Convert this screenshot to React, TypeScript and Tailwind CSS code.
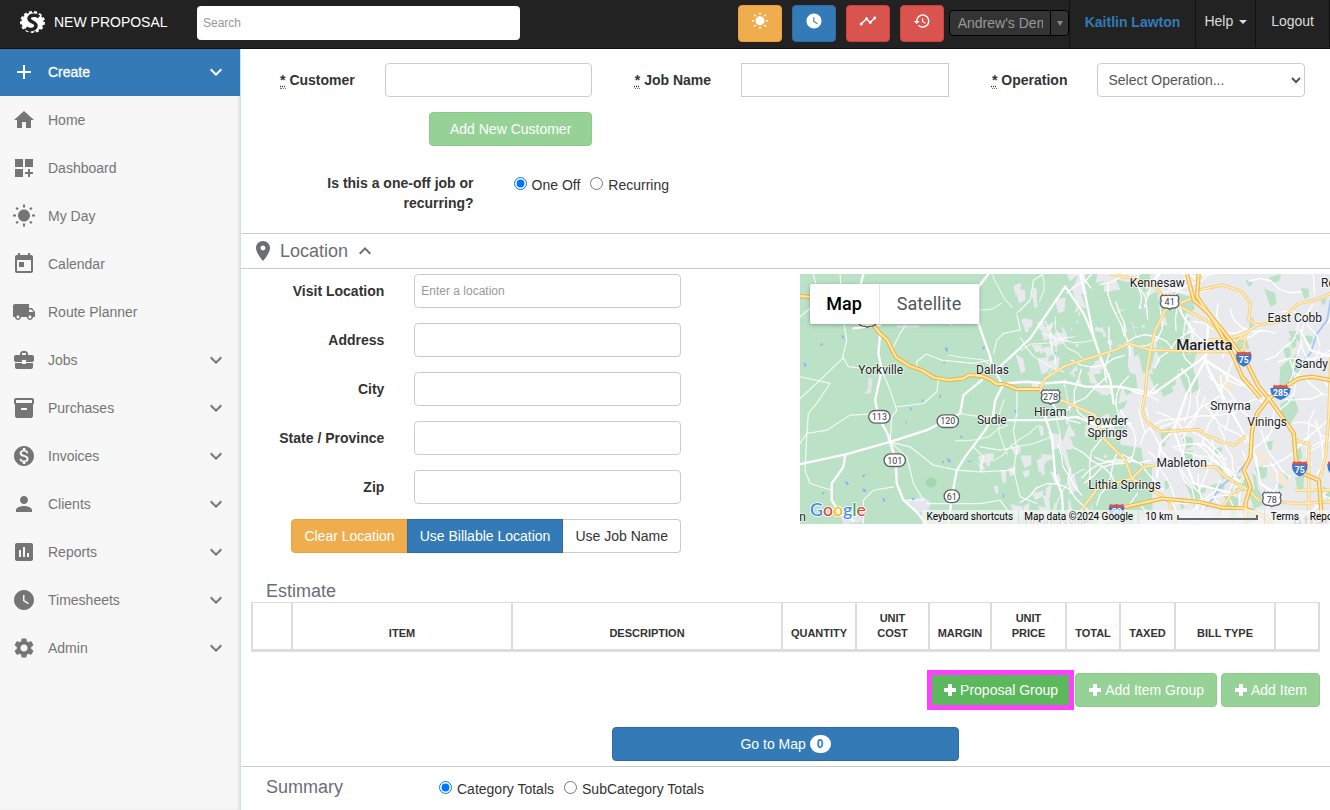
import type { ReactNode } from "react";
import type { IconType } from "react-icons";
import {
  MdAdd,
  MdAssessment,
  MdBusinessCenter,
  MdDashboardCustomize,
  MdExpandLess,
  MdExpandMore,
  MdHistory,
  MdHome,
  MdInventory2,
  MdLocalShipping,
  MdLocationOn,
  MdMonetizationOn,
  MdPerson,
  MdSettings,
  MdTimeline,
  MdToday,
  MdWatchLater,
  MdWbSunny,
} from "react-icons/md";

type NavItem = { label: string; icon: IconType; expandable?: boolean };

const navItems: NavItem[] = [
  { label: "Home", icon: MdHome },
  { label: "Dashboard", icon: MdDashboardCustomize },
  { label: "My Day", icon: MdWbSunny },
  { label: "Calendar", icon: MdToday },
  { label: "Route Planner", icon: MdLocalShipping },
  { label: "Jobs", icon: MdBusinessCenter, expandable: true },
  { label: "Purchases", icon: MdInventory2, expandable: true },
  { label: "Invoices", icon: MdMonetizationOn, expandable: true },
  { label: "Clients", icon: MdPerson, expandable: true },
  { label: "Reports", icon: MdAssessment, expandable: true },
  { label: "Timesheets", icon: MdWatchLater, expandable: true },
  { label: "Admin", icon: MdSettings, expandable: true },
];

const quickActions = [
  { label: "My day", icon: MdWbSunny, color: "border-[#eea236] bg-[#f0ad4e]" },
  { label: "Clock in", icon: MdWatchLater, color: "border-[#2e6da4] bg-[#337ab7]" },
  { label: "Activity", icon: MdTimeline, color: "border-[#d43f3a] bg-[#d9534f]" },
  { label: "History", icon: MdHistory, color: "border-[#d43f3a] bg-[#d9534f]" },
];

const locationFields = [
  { id: "visit-location", label: "Visit Location", placeholder: "Enter a location" },
  { id: "address", label: "Address" },
  { id: "city", label: "City" },
  { id: "state", label: "State / Province" },
  { id: "zip", label: "Zip" },
];

const columns = [
  { label: "", width: "w-[40px]" },
  { label: "Item", width: "w-[220px]" },
  { label: "Description", width: "" },
  { label: "Quantity", width: "w-[74px]" },
  { label: "Unit Cost", width: "w-[73px]" },
  { label: "Margin", width: "w-[62px]" },
  { label: "Unit Price", width: "w-[75px]" },
  { label: "Total", width: "w-[54px]" },
  { label: "Taxed", width: "w-[55px]" },
  { label: "Bill Type", width: "w-[100px]" },
  { label: "", width: "w-[44px]" },
];

const inputClass =
  "h-[34px] w-full border border-[#ccc] bg-white px-1.5 text-xs text-[#555] placeholder:text-[#999]";

function Logo() {
  return (
    <svg viewBox="0 0 50 44" className="h-[22px] w-[25px]" aria-hidden="true">
      <ellipse cx="25" cy="22" rx="22" ry="19" fill="#fff" />
      <ellipse cx="25" cy="22" rx="23" ry="20" fill="none" stroke="#fff" strokeWidth="4" strokeDasharray="6 4.400" />
      <path
        d="M38 12C32 6 19 8 18 15c0 7 14 7 14 14 0 8-12 11-20 5"
        fill="none"
        stroke="#222"
        strokeWidth="7"
      />
    </svg>
  );
}

function Header() {
  return (
    <header className="flex h-[49px] items-start border-b border-[#101010] bg-[#222] text-[#ddd]">
      <a href="#home" className="flex h-11 w-[197px] shrink-0 items-center gap-[9px] pl-5 text-white">
        <Logo />
        <span>NEW PROPOSAL</span>
      </a>
      <input
        type="search"
        aria-label="Search"
        placeholder="Search"
        className="mt-1.5 h-[34px] w-[323px] rounded bg-white px-1.5 text-xs text-[#555] placeholder:text-[#999]"
      />
      <div className="mt-[5px] ml-auto flex gap-2.5">
        {quickActions.map(({ label, icon: Icon, color }) => (
          <button
            key={label}
            aria-label={label}
            className={`flex h-[37px] w-11 items-center justify-center rounded border pb-1.5 text-white ${color}`}
          >
            <Icon size={18} />
          </button>
        ))}
      </div>
      <div className="relative mt-2.5 ml-[5px]">
        <select
          aria-label="Company"
          className="h-[26px] w-[120px] appearance-none rounded border border-black bg-[#333] pr-[25px] pl-2 text-[#999]"
        >
          <option>Andrew's Demo</option>
        </select>
        <span className="pointer-events-none absolute inset-y-0 right-0 flex w-[19px] items-center justify-center border-l border-black">
          <svg viewBox="0 0 6 5" className="h-[5px] w-1.5" aria-hidden="true">
            <path d="M0 0h6L3 5z" fill="#888" />
          </svg>
        </span>
      </div>
      <nav className="flex h-[47px] leading-5">
        <a href="#profile" className="border-l border-[#101010] px-[15px] pt-3 font-bold text-[#337ab7]">
          Kaitlin Lawton
        </a>
        <a href="#help" className="flex gap-1.5 border-l border-[#101010] px-2 pt-[11px]">
          Help
          <svg viewBox="0 0 8 4" className="mt-[9px] h-1 w-2" aria-hidden="true">
            <path d="M0 0h8L4 4z" fill="#ddd" />
          </svg>
        </a>
        <a href="#logout" className="border-x border-[#101010] px-[15px] pt-[11px]">
          Logout
        </a>
      </nav>
    </header>
  );
}

function Sidebar() {
  return (
    <aside className="w-[241px] shrink-0 border-r border-[#d5dfe8] bg-[#f7f7f7] text-[#757575] shadow-[inset_-2px_0_2px_rgba(0,0,0,0.08)]">
      <button className="flex h-[47px] w-full items-center gap-3 bg-[#337ab7] px-3 pb-px text-left text-white">
        <MdAdd size={24} />
        <span className="flex-1 [-webkit-text-stroke:0.3px]">Create</span>
        <MdExpandMore size={24} />
      </button>
      <nav>
        {navItems.map(({ label, icon: Icon, expandable }) => (
          <a key={label} href={`#${label}`} className="flex h-12 items-center gap-3 px-3">
            <Icon size={24} />
            <span className="flex-1">{label}</span>
            {expandable && <MdExpandMore size={24} />}
          </a>
        ))}
      </nav>
    </aside>
  );
}

function RequiredField({ id, label, children }: { id: string; label: string; children: ReactNode }) {
  return (
    <div className="flex items-center">
      <label htmlFor={id} className="w-1/3 px-[15px] text-right font-bold whitespace-nowrap">
        <abbr title="required" className="border-b border-dotted border-[#777]">*</abbr> {label}
      </label>
      <div className="w-2/3 px-[15px]">{children}</div>
    </div>
  );
}

function Radio({ name, label, checked }: { name: string; label: string; checked?: boolean }) {
  return (
    <label className="flex items-center gap-[5px] leading-5">
      <input type="radio" name={name} defaultChecked={checked} className="mb-[3px] h-[13px] w-[13px] accent-[#0075ff]" />
      {label}
    </label>
  );
}

function PlusIcon() {
  return (
    <svg viewBox="0 0 14 14" className="h-3.5 w-3.5" aria-hidden="true">
      <path d="M5.500 1h3q.5 0 .5.500V5h3.500q.5 0 .5.500v3q0 .5-.5.500H9v3.500q0 .5-.5.500h-3q-.5 0-.5-.5V9H1.500q-.5 0-.5-.5v-3q0-.5.500-.5H5V1.500q0-.5.500-.5z" fill="#fff" />
    </svg>
  );
}

/* ---- Map ---- */

const majorRoads = [
  "240,190 235,250 245,300 225,390 235,440 262,490 270,515 287,570 290,640 310,690 350,725 380,762",
  "0,582 140,552 270,515 380,480 420,460 480,430 490,375 545,330",
  "565,12 535,50 535,160 545,190 570,260 575,285 605,340",
  "795,50 690,205 610,280 590,300",
  "610,342 585,390 578,440 555,480 495,560 470,600 455,680 445,762",
  "610,340 680,335 735,340 795,335 860,350 960,350 1060,370 1200,270 1230,240",
  "735,440 755,500 760,560 765,620 785,670 790,762",
  "135,555 130,590 95,640 95,690 120,730 160,750",
  "620,450 740,450 830,440 900,470 990,460",
  "160,175 240,165",
  "190,12 180,50",
  "795,50 850,130 880,200 900,260 930,330 940,400",
  "1215,270 1225,300 1280,400 1330,490",
  "1215,270 1160,370 1120,480 1080,520 1070,620",
  "1225,150 1215,270 1340,350 1390,400",
  "840,12 860,100 880,200",
  "1120,480 1150,560 1180,640 1300,670",
  "1340,500 1365,560 1380,640 1440,680",
  "1500,180 1530,240 1590,260",
];

const minorRoads = [
  "120,12 130,150 140,210 128,260 145,290 245,300",
  "0,385 60,330 128,265",
  "0,320 90,340 50,400 25,430 20,500 15,600 30,640 95,660",
  "245,300 270,360 290,420 275,440 270,515",
  "240,430 150,435 80,480 20,490 0,520",
  "350,290 350,275 378,252 425,270 520,280 570,270",
  "415,330 410,365 370,400 290,410",
  "270,515 330,530 400,585 470,600 540,605 640,600",
  "270,515 320,560 340,640 370,690 310,690",
  "280,230 300,190 320,160",
  "580,250 590,210 610,190 660,180 650,130 690,90 700,30 730,12",
  "650,357 650,430 640,480 650,540 640,600 660,680 710,700",
  "540,530 600,540 700,520 755,500",
  "480,430 540,440 578,440",
  "540,605 550,560 520,530",
  "380,700 540,700 600,690 650,760",
  "190,762 190,690 220,660 280,650",
  "40,12 60,90 0,140",
];

// roads in the metro area; coordinates start at the second map tile
const metroHighways = [
  "135,12 200,25 270,50 300,90",
  "400,60 470,45 530,65 555,100 550,150 575,165 640,155 700,100 750,90 795,70",
  "345,110 420,150 470,190",
  "400,75 300,120 270,180 255,240 245,300 240,370 230,420 245,455 285,485 400,478 420,495 470,515 505,525 540,500",
  "-75,357 -60,325 0,287 150,240 190,220 255,240 330,242 400,245 490,245 530,195 575,165",
  "-75,357 -40,380 0,395 90,435 110,500 180,570 200,625 270,665 310,690 330,762",
  "40,730 100,650 200,625 235,590 270,585",
  "400,590 450,590 480,620 550,660 580,690 700,700 795,695",
  "470,712 500,670 540,650",
  "685,510 730,520 730,720",
  "795,260 790,440 780,560 765,620",
  "430,210 495,205 540,190 530,280",
  "690,660 795,660",
];

const interstates = [
  "365,12 385,90 430,130 495,210 545,280 580,350 610,385 650,440 685,490 690,560 700,605 760,630 765,690 770,762",
  "400,12 395,80 440,145 500,250 530,320 585,385",
  "795,330 740,320 700,325 660,350 610,385 575,430 560,480 555,560 535,600 555,650 540,700 540,762",
  "110,735 170,712 290,685 400,695 470,712 540,715 600,740 620,762",
];

const mapLabels: [string, number, number][] = [
  ["Yorkville", 242, 312],
  ["Dallas", 577, 312],
  ["Sudie", 575, 463],
  ["Hiram", 750, 439],
  ["Kennesaw", 1071, 52],
  ["East Cobb", 1483, 157],
  ["Sandy", 1533, 295],
  ["Smyrna", 1290, 419],
  ["Vinings", 1400, 469],
  ["Powder", 922, 465],
  ["Springs", 922, 502],
  ["Mableton", 1144, 589],
  ["Lithia Springs", 973, 655],
  ["Roswell", 1624, 52],
];

const stateRoutes: [string, number, number][] = [
  ["113", 238, 440],
  ["120", 443, 453],
  ["101", 284, 570],
  ["61", 455, 678],
];

const usRoutes: [string, number, number][] = [
  ["6", 202, 150],
  ["278", 751, 380],
  ["41", 1108, 96],
  ["78", 1414, 687],
];

const interstateShields: [string, number, number][] = [
  ["75", 1330, 268],
  ["285", 1440, 368],
  ["75", 1498, 597],
  ["20", 949, 725],
  ["85", 1604, 597],
];

function makeRandom(seed: number) {
  let s = seed;
  return () => {
    s = (s * 16807) % 2147483647;
    return s / 2147483647;
  };
}

// irregular land patches scattered over a rectangle
function scatter(seed: number, count: number, x0: number, x1: number, y0: number, y1: number, size: number) {
  const rnd = makeRandom(seed);
  return Array.from({ length: count }, () => {
    const x = x0 + rnd() * (x1 - x0);
    const y = y0 + rnd() * (y1 - y0);
    const a = size * (0.4 + rnd());
    const b = size * (0.4 + rnd());
    const skew = (rnd() - 0.5) * size;
    return `M${x.toFixed(0)} ${y.toFixed(0)}l${a.toFixed(0)} ${skew.toFixed(0)} ${(skew / 2).toFixed(0)} ${b.toFixed(0)} ${(-a * 0.6).toFixed(0)} ${(a * 0.3).toFixed(0)}z`;
  }).join("");
}

// short winding local streets
function streets(seed: number, count: number, x0: number, x1: number) {
  const rnd = makeRandom(seed);
  return Array.from({ length: count }, () => {
    let angle = rnd() * Math.PI * 2;
    let d = `M${(x0 + rnd() * (x1 - x0)).toFixed(0)} ${(rnd() * 760).toFixed(0)}`;
    for (let i = 0; i < 5; i++) {
      angle += (rnd() - 0.5) * 1.1;
      d += `l${(Math.cos(angle) * 34).toFixed(0)} ${(Math.sin(angle) * 34).toFixed(0)}`;
    }
    return d;
  }).join("");
}

const greyPatches =
  scatter(11, 20, 530, 760, 460, 720, 26) + scatter(23, 22, 640, 790, 40, 280, 30) + scatter(31, 8, 690, 800, 300, 740, 30);
const greenPatches =
  scatter(47, 95, 790, 960, 12, 740, 52) +
  scatter(53, 60, 940, 1140, 12, 320, 46) +
  scatter(59, 26, 800, 1010, 520, 720, 60) +
  scatter(61, 34, 1080, 1600, 480, 740, 30) +
  scatter(67, 16, 1300, 1600, 20, 240, 26);
const waterPatches = scatter(71, 28, 10, 780, 40, 740, 8);

function RoadMap() {
  return (
    <svg
      viewBox="0 12 1590 750"
      preserveAspectRatio="xMinYMin slice"
      className="block h-[250px] w-full font-['Roboto',sans-serif]"
      role="img"
      aria-label="Road map"
    >
      <rect y="12" width="1590" height="750" fill="#bbe2c6" />
      <path d="M800 12l30 90-20 80 30 90-50 60 20 120-30 80 30 90-10 140h790V12z" fill="#e8eaed" />
      <path d={greyPatches} fill="#e8eaed" />
      <path d="M290 165h66v8h-66zM205 320l12 6-4 42-22 4 12-14zM310 690l60-10 20 14-4 30-40 4zM120 735l60-20 10 40-60 8z" fill="#e3e6ec" />
      <path d={greenPatches} fill="#bbe2c6" />
      <path d="M1085 185l60-30 20 45-30 60-50 20zM1075 275l60 10-10 60-50 20-20-40zM1440 290l50-40 10 50-40 60-25 10zM1440 400l40-20 15 40-30 50-25-20z" fill="#bbe2c6" />
      <path d="M1250 325l45 5 5 30-40 4zM1370 545l30 5 5 24-34 5zM1415 600l35 10 20 40-14 6-35-30zM1070 65l40-5 20 20-40 30z" fill="#f3e9d8" />
      <path d={waterPatches} fill="#8ab4f8" />
      <path d="M1590 90l-10 60-30 40-20 60-50 50-20 50M1350 560l-30 40-60 50-40 60" fill="none" stroke="#a3c4f8" strokeWidth="5" />
      <ellipse cx="393" cy="637" rx="16" ry="15" fill="#a5d6b2" />

      <g fill="none" stroke="#fff" strokeLinejoin="round" strokeLinecap="round">
        <path d={streets(83, 110, 800, 1590)} strokeWidth="4" />
        <path d={streets(89, 16, 560, 790)} strokeWidth="3" strokeOpacity="0.8" />
        {minorRoads.map((p) => (
          <polyline key={p} points={p} strokeWidth="3.500" strokeOpacity="0.85" />
        ))}
        {majorRoads.map((p) => (
          <polyline key={p} points={p} strokeWidth="7" />
        ))}
      </g>

      <g fill="none" strokeLinejoin="round">
        <g stroke="#f6c768" strokeWidth="9">
          {metroHighways.map((p) => (
            <polyline key={p} points={p} transform="translate(795 0)" />
          ))}
        </g>
        <g stroke="#feecbd" strokeWidth="5">
          {metroHighways.map((p) => (
            <polyline key={p} points={p} transform="translate(795 0)" />
          ))}
        </g>
        {[
          { color: "#f4b63f", width: 13 },
          { color: "#fde9b3", width: 6 },
        ].map(({ color, width }) => (
          <g key={color} stroke={color} strokeWidth={width}>
            <polyline points="215,160 240,190 262,210 288,262 330,288 365,300 400,322 445,330 490,325 505,315 545,318 570,328 590,342 612,342 650,357 720,357" />
            <polyline points="0,78 40,82" />
            {interstates.map((p) => (
              <polyline key={p} points={p} transform="translate(795 0)" />
            ))}
          </g>
        ))}
      </g>

      <g fill="#fff" stroke="#5f6368" strokeWidth="4">
        {stateRoutes.map(([n, x, y]) => (
          <rect key={n} x={x - 5 - n.length * 9} y={y - 19} width={n.length * 18 + 10} height="38" rx="19" />
        ))}
        {usRoutes.map(([n, x, y]) => (
          <path
            key={n}
            transform={`translate(${x} ${y})`}
            d="M-22-21q6 4 11 0 6 4 11 0 5 4 11 0 5 4 11 0l6 8q-5 9 0 17-2 13-15 14-8 0-13 4-5-4-13-4-13-1-15-14 5-8 0-17z"
          />
        ))}
      </g>
      {interstateShields.map(([n, x, y]) => (
        <g key={`${n}-${x}`} transform={`translate(${x} ${y})`}>
          <path d="M-20-24q10 5 20 0 10 5 20 0l4 14h-48z" fill="#d9534a" />
          <path d={n.length > 2 ? "M-30-14h60q2 26-30 36-32-10-30-36z" : "M-23-14h46q2 26-23 36-25-10-23-36z"} fill="#3d78cf" />
        </g>
      ))}
      <g textAnchor="middle" fontSize="27" fill="#3c4043">
        {[...stateRoutes, ...usRoutes].map(([n, x, y]) => (
          <text key={n} x={x} y={y + 10}>{n}</text>
        ))}
      </g>
      <g textAnchor="middle" fontSize="26" fontWeight="700" fill="#fff">
        {interstateShields.map(([n, x, y]) => (
          <text key={`${n}-${x}`} x={x} y={y + 10}>{n}</text>
        ))}
      </g>

      <g textAnchor="middle" fontSize="36" fill="#202124" stroke="#fff" strokeWidth="5" strokeOpacity="0.7" paintOrder="stroke" strokeLinejoin="round">
        {mapLabels.map(([name, x, y]) => (
          <text key={name} x={x} y={y}>{name}</text>
        ))}
        <text x="1212" y="241" fontSize="45" fontWeight="500">Marietta</text>
        <text x="8" y="752">n</text>
        <text x="770" y="768" fill="#777">Douglasville</text>
        <text x="1560" y="772" fontSize="54" fontWeight="500" fill="#888">Atlanta</text>
      </g>
      <text x="30" y="738" fontSize="53" fontWeight="500" stroke="#fff" strokeWidth="5" paintOrder="stroke" className="font-['Lato',sans-serif]">
        <tspan fill="#4285f4">G</tspan>
        <tspan fill="#ea4335">o</tspan>
        <tspan fill="#fbbc05">o</tspan>
        <tspan fill="#4285f4">g</tspan>
        <tspan fill="#34a853">l</tspan>
        <tspan fill="#ea4335">e</tspan>
      </text>
    </svg>
  );
}

function MapPanel() {
  return (
    <div className="relative h-[250px] min-w-0 flex-1 overflow-hidden font-['Roboto',sans-serif]">
      <RoadMap />
      <div className="absolute top-2.5 left-2.5 flex h-10 rounded-xs bg-white text-lg shadow-[0_1px_4px_rgba(0,0,0,0.3)]">
        <button className="w-[70px] border-r border-[#e6e6e6] font-medium text-black">Map</button>
        <button className="w-[99px] text-[#565656]">Satellite</button>
      </div>
      <div className="absolute right-0 bottom-0 left-[122px] flex h-3.5 items-center overflow-hidden bg-[#f5f5f5]/75 text-[10px] leading-3.5 whitespace-nowrap text-black">
        <button className="px-[5px]">Keyboard shortcuts</button>
        <span className="border-l border-[#ddd] px-[5px]">Map data ©2024 Google</span>
        <button className="flex items-center gap-1 border-l border-[#ddd] px-1.5">
          10 km
          <span className="h-[5px] w-[81px] border-2 border-t-0 border-[#666]" />
        </button>
        <a href="#terms" className="border-l border-[#ddd] px-1.5">Terms</a>
        <a href="#report" className="px-[5px]">Report a map error</a>
      </div>
    </div>
  );
}

function LocationSection() {
  return (
    <section>
      <h2 className="flex h-9 items-center border-y border-[#ccc] pl-2.5 text-lg text-[#6b6e76]">
        <MdLocationOn size={24} />
        <span className="ml-[5px]">Location</span>
        <MdExpandLess size={24} className="ml-[5px]" />
      </h2>
      <div className="flex pt-[5px]">
        <div className="w-1/2 pl-2.5">
          <div className="flex max-w-[445px] flex-col gap-[15px]">
            {locationFields.map(({ id, label, placeholder }) => (
              <div key={id} className="flex items-center">
                <label htmlFor={id} className="w-1/3 pr-[15px] text-right font-bold whitespace-nowrap">
                  {label}
                </label>
                <div className="w-2/3 px-[15px]">
                  <input id={id} type="text" placeholder={placeholder} className={`${inputClass} rounded`} />
                </div>
              </div>
            ))}
            <div className="flex h-[34px] justify-end pr-[15px]">
              <button className="rounded-l border border-[#eea236] bg-[#f0ad4e] px-3 text-white">Clear Location</button>
              <button className="-ml-px border border-[#2e6da4] bg-[#337ab7] px-3 text-white">Use Billable Location</button>
              <button className="rounded-r border border-l-0 border-[#ccc] bg-white px-3">Use Job Name</button>
            </div>
          </div>
        </div>
        <div className="flex w-1/2 pl-3.5">
          <MapPanel />
        </div>
      </div>
    </section>
  );
}

function EstimateSection() {
  return (
    <section className="px-2.5 pt-7">
      <h2 className="pb-px pl-[15px] text-lg leading-5 text-[#6b6e76]">Estimate</h2>
      <table className="w-full table-fixed border-collapse text-[11px] leading-[15px]">
        <thead>
          <tr>
            {columns.map(({ label, width }, i) => (
              <th
                key={i}
                scope="col"
                className={`border-x-2 border-t border-b-[3px] border-[#ddd] px-1.5 py-2 text-center align-bottom font-bold uppercase ${width}`}
              >
                {label}
              </th>
            ))}
          </tr>
        </thead>
      </table>
      <div className="mt-[21px] flex justify-end gap-1 text-white">
        <button className="flex h-[34px] items-center gap-[3px] border border-[#4cae4c] bg-[#5cb85c] px-3 outline-[5px] outline-offset-[-2px] outline-[#ff40ff] outline-solid">
          <PlusIcon />
          Proposal Group
        </button>
        <button className="flex h-[34px] items-center gap-[3px] rounded border border-[#8acb8a] bg-[#96d296] px-3">
          <PlusIcon />
          Add Item Group
        </button>
        <button className="flex h-[34px] items-center gap-[3px] rounded border border-[#8acb8a] bg-[#96d296] px-3">
          <PlusIcon />
          Add Item
        </button>
      </div>
      <button className="mx-auto mt-5 mb-[5px] flex h-[34px] w-[347px] items-center justify-center gap-1 rounded border border-[#2e6da4] bg-[#337ab7] text-white">
        Go to Map
        <span className="rounded-full bg-white px-[7px] text-xs leading-[18px] font-bold text-[#337ab7]">0</span>
      </button>
    </section>
  );
}

export default function App() {
  return (
    <div className="flex min-h-screen flex-col bg-white font-['Liberation_Sans',Arial,sans-serif] text-sm text-[#333]">
      <Header />
      <div className="flex flex-1">
        <Sidebar />
        <main className="min-w-0 flex-1">
          <form className="px-2.5 pt-3.5 pb-5">
            <div className="grid grid-cols-3">
              <RequiredField id="customer" label="Customer">
                <input id="customer" type="text" className={`${inputClass} rounded`} />
              </RequiredField>
              <RequiredField id="job-name" label="Job Name">
                <input id="job-name" type="text" className={inputClass} />
              </RequiredField>
              <RequiredField id="operation" label="Operation">
                <select id="operation" className="h-[34px] w-full rounded border border-[#ccc] bg-white px-1.5 text-[#555]">
                  <option>Select Operation...</option>
                </select>
              </RequiredField>
            </div>
            <div className="mt-[15px] flex w-1/3 justify-end pr-[15px]">
              <button type="button" className="h-[34px] rounded border border-[#8acb8a] bg-[#96d296] px-5 text-white">
                Add New Customer
              </button>
            </div>
            <fieldset className="mt-[27px] flex items-start">
              <legend className="float-left w-2/9 px-[15px] text-right leading-5 font-bold">
                Is this a one-off job or recurring?
              </legend>
              <div className="flex gap-[10px] pt-0.5 pl-[25px]">
                <Radio name="frequency" label="One Off" checked />
                <Radio name="frequency" label="Recurring" />
              </div>
            </fieldset>
          </form>
          <LocationSection />
          <EstimateSection />
          <section className="flex items-start border-t border-[#ccc] py-2.5 pl-[25px]">
            <h2 className="w-[173px] text-lg leading-5 text-[#6b6e76]">Summary</h2>
            <div className="flex gap-[10px] pt-0.5">
              <Radio name="totals" label="Category Totals" checked />
              <Radio name="totals" label="SubCategory Totals" />
            </div>
          </section>
        </main>
      </div>
    </div>
  );
}
